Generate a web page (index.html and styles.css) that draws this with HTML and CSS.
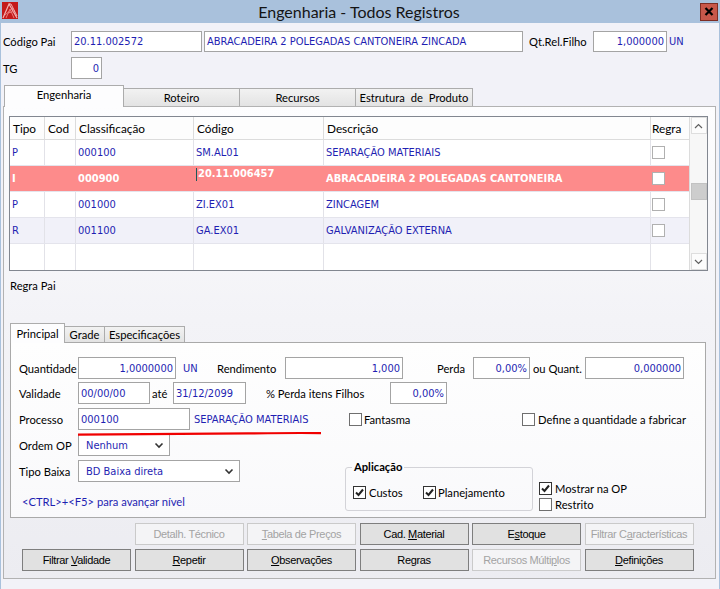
FILE: index.html
```html
<!DOCTYPE html>
<html>
<head>
<meta charset="utf-8">
<title>Engenharia - Todos Registros</title>
<link rel="stylesheet" href="styles.css">
</head>
<body>
<div class="win">
  <div class="titlebar">
    <svg class="appicon" width="16" height="17" viewBox="0 0 16 17">
      <rect x="0" y="0" width="16" height="17" fill="#c41a1a"/>
      <path d="M1 16 L7 2 L15 16" fill="none" stroke="#f3b3b3" stroke-width="1.2"/>
      <path d="M4 16 L8 7 L12 16 M6 11 L13 9 M3 13 L11 6" fill="none" stroke="#e87a7a" stroke-width="1"/>
      <path d="M7 2 L9 2 L15 14" fill="none" stroke="#ffd6d6" stroke-width="0.8"/>
    </svg>
    <div class="title">Engenharia - Todos Registros</div>
    <div class="closebtn"><svg width="10" height="9" viewBox="0 0 10 9"><path d="M1.5 1 L8.5 8 M8.5 1 L1.5 8" stroke="#000" stroke-width="2.2"/></svg></div>
  </div>

  <div class="content">
    <div class="hrow r1">
      <span class="lbl l-cp">Código Pai</span>
      <div class="inp i-cp">20.11.002572</div>
      <div class="inp i-desc">ABRACADEIRA 2 POLEGADAS CANTONEIRA ZINCADA</div>
      <span class="lbl l-qt">Qt.Rel.Filho</span>
      <div class="inp num i-qt">1,000000</div>
      <span class="bluedata un1">UN</span>
    </div>
    <div class="hrow r2">
      <span class="lbl l-cp">TG</span>
      <div class="inp num i-tg">0</div>
    </div>

    <div class="tabs1">
      <div class="tab active t-eng">Engenharia</div>
      <div class="tab t-rot">Roteiro</div>
      <div class="tab t-rec">Recursos</div>
      <div class="tab t-est">Estrutura de Produto</div>
    </div>

    <div class="panel1">
      <div class="grid">
        <div class="gcols">
          <div class="grow ghead">
            <div class="gc">Tipo</div><div class="gc">Cod</div><div class="gc">Classificação</div><div class="gc">Código</div><div class="gc">Descrição</div><div class="gc">Regra</div>
          </div>
          <div class="grow gdata">
            <div class="gc">P</div><div class="gc"></div><div class="gc">000100</div><div class="gc">SM.AL01</div><div class="gc">SEPARAÇÃO MATERIAIS</div><div class="gc"><span class="cb cb-grid"></span></div>
          </div>
          <div class="grow gdata gsel">
            <div class="gc">I</div><div class="gc"></div><div class="gc">000900</div><div class="gc gc-edit"><span class="caret"></span><span>20.11.006457</span></div><div class="gc">ABRACADEIRA 2 POLEGADAS CANTONEIRA</div><div class="gc"><span class="cb cb-grid"></span></div>
          </div>
          <div class="grow gdata">
            <div class="gc">P</div><div class="gc"></div><div class="gc">001000</div><div class="gc">ZI.EX01</div><div class="gc">ZINCAGEM</div><div class="gc"><span class="cb cb-grid"></span></div>
          </div>
          <div class="grow gdata alt">
            <div class="gc">R</div><div class="gc"></div><div class="gc">001100</div><div class="gc">GA.EX01</div><div class="gc">GALVANIZAÇÃO EXTERNA</div><div class="gc"><span class="cb cb-grid"></span></div>
          </div>
          <div class="grow gdata last">
            <div class="gc"></div><div class="gc"></div><div class="gc"></div><div class="gc"></div><div class="gc"></div><div class="gc"></div>
          </div>
        </div>
        <div class="vscroll">
          <div class="sbtn"><svg width="9" height="6" viewBox="0 0 9 6"><path d="M1 5 L4.5 1.5 L8 5" fill="none" stroke="#606060" stroke-width="1.2"/></svg></div>
          <div class="sgap1"></div>
          <div class="sthumb"></div>
          <div class="sgap2"></div>
          <div class="sbtn"><svg width="9" height="6" viewBox="0 0 9 6"><path d="M1 1 L4.5 4.5 L8 1" fill="none" stroke="#606060" stroke-width="1.2"/></svg></div>
        </div>
      </div>

      <div class="regrapai">Regra Pai</div>

      <div class="tabs2">
        <div class="tab2 active2 t-pri">Principal</div>
        <div class="tab2 t-gra">Grade</div>
        <div class="tab2 t-esp">Especificações</div>
      </div>

      <div class="panel2">
        <div class="prow pr1">
          <span class="lbl pl">Quantidade</span>
          <div class="inp num w98">1,0000000</div>
          <span class="bluedata un2">UN</span>
          <span class="lbl w68">Rendimento</span>
          <div class="inp num w118">1,000</div>
          <span class="lbl perda">Perda</span>
          <div class="inp num w57">0,00%</div>
          <span class="lbl ouq">ou Quant.</span>
          <div class="inp num w99">0,000000</div>
        </div>
        <div class="prow pr2">
          <span class="lbl pl">Validade</span>
          <div class="inp w72">00/00/00</div>
          <span class="lbl ate">até</span>
          <div class="inp w73">31/12/2099</div>
          <span class="lbl pfil">% Perda itens Filhos</span>
          <div class="inp num w57">0,00%</div>
        </div>
        <div class="prow pr3">
          <span class="lbl pl">Processo</span>
          <div class="inp w112">000100</div>
          <span class="bluedata procdesc">SEPARAÇÃO MATERIAIS</span>
          <span class="cb"></span>
          <span class="lbl fant">Fantasma</span>
          <span class="cb"></span>
          <span class="lbl defq">Define a quantidade a fabricar</span>
        </div>

        <div class="plower">
          <div class="pleft">
            <div class="prow pr4">
              <span class="lbl pl">Ordem OP</span>
              <div class="dd w92"><span>Nenhum</span><svg width="10" height="7" viewBox="0 0 10 7"><path d="M1.5 1.5 L5 5 L8.5 1.5" fill="none" stroke="#333" stroke-width="1.6"/></svg></div>
            </div>
            <div class="prow pr5">
              <span class="lbl pl">Tipo Baixa</span>
              <div class="dd w162"><span>BD Baixa direta</span><svg width="10" height="7" viewBox="0 0 10 7"><path d="M1.5 1.5 L5 5 L8.5 1.5" fill="none" stroke="#333" stroke-width="1.6"/></svg></div>
            </div>
            <div class="ctrl">&lt;CTRL&gt;+&lt;F5&gt; para avançar nível</div>
          </div>
          <div class="grpbox">
            <span class="legend">Aplicação</span>
            <div class="grprow">
              <span class="cb on"><svg width="11" height="11" viewBox="0 0 11 11"><path d="M2 5.5 L4.5 8 L9 2.5" fill="none" stroke="#222" stroke-width="2"/></svg></span>
              <span class="lbl cust">Custos</span>
              <span class="cb on"><svg width="11" height="11" viewBox="0 0 11 11"><path d="M2 5.5 L4.5 8 L9 2.5" fill="none" stroke="#222" stroke-width="2"/></svg></span>
              <span class="lbl plan">Planejamento</span>
            </div>
          </div>
          <div class="rightchk">
            <div class="chkrow">
              <span class="cb on"><svg width="11" height="11" viewBox="0 0 11 11"><path d="M2 5.5 L4.5 8 L9 2.5" fill="none" stroke="#222" stroke-width="2"/></svg></span>
              <span class="lbl">Mostrar na OP</span>
            </div>
            <div class="chkrow chk2">
              <span class="cb"></span>
              <span class="lbl">Restrito</span>
            </div>
          </div>
        </div>
      </div>

      <div class="btns">
        <div class="bspace"></div>
        <div class="btn dis">Detalh. Técnico</div>
        <div class="btn dis"><u>T</u>abela de Preços</div>
        <div class="btn">Cad. <u>M</u>aterial</div>
        <div class="btn">E<u>s</u>toque</div>
        <div class="btn dis">Filtrar C<u>a</u>racterísticas</div>
        <div class="btn">Filtrar <u>V</u>alidade</div>
        <div class="btn"><u>R</u>epetir</div>
        <div class="btn"><u>O</u>bservações</div>
        <div class="btn">Re<u>g</u>ras</div>
        <div class="btn dis">Recursos Múlti<u>p</u>los</div>
        <div class="btn"><u>D</u>efinições</div>
      </div>
    </div>
  </div>

  <svg class="redline" width="250" height="6" viewBox="0 0 250 6">
    <path d="M0 3.6 C 60 3.4, 120 3.0, 170 2.4 S 230 1.8, 243 2.2" fill="none" stroke="#f00000" stroke-width="2.2"/>
  </svg>
</div>
</body>
</html>
```

FILE: styles.css
```css
body {
  margin: 0;
  background: #f2f2f8;
}

.win {
  position: relative;
  width: 720px;
  height: 589px;
  box-sizing: border-box;
  border-left: 1px solid #a9c1dc;
  border-right: 1px solid #a9c1dc;
  background: #f2f2f8;
  font-family: Lato, "Liberation Sans", sans-serif;
  font-size: 11.2px;
  color: #000;
  overflow: hidden;
}

/* title bar */
.titlebar {
  display: flex;
  align-items: center;
  height: 23px;
  background: #a9c1dc;
}
.appicon {
  margin-left: 1px;
  margin-top: -3px;
  flex-shrink: 0;
}
.title {
  flex: 1;
  text-align: center;
  font-size: 16px;
  line-height: 23px;
  color: #141414;
}
.closebtn {
  width: 18px;
  height: 18px;
  box-sizing: border-box;
  margin-right: 1px;
  background: #c8574a;
  border: 1px solid #7d2d24;
  display: flex;
  align-items: center;
  justify-content: center;
}

.content {
  padding-left: 2px;
}

/* generic */
.lbl {
  flex-shrink: 0;
  white-space: nowrap;
}
.inp {
  box-sizing: border-box;
  height: 100%;
  flex-shrink: 0;
  border: 1px solid #a4a4a4;
  background: #fff;
  font-family: "DejaVu Sans Condensed", "DejaVu Sans", sans-serif;
  font-stretch: condensed;
  font-size: 11px;
  color: #1f1fb2;
  padding: 0 2px;
  display: flex;
  align-items: center;
  white-space: nowrap;
  overflow: hidden;
}
.inp.num {
  justify-content: flex-end;
}
.bluedata {
  font-family: "DejaVu Sans Condensed", "DejaVu Sans", sans-serif;
  font-stretch: condensed;
  font-size: 11px;
  color: #1f1fb2;
  white-space: nowrap;
  flex-shrink: 0;
}

/* header rows */
.hrow {
  display: flex;
  align-items: center;
}
.r1 {
  margin-top: 8px;
  height: 21px;
}
.r2 {
  margin-top: 5px;
  height: 22px;
}
.l-cp { width: 68px; }
.i-cp { width: 131px; }
.i-desc { width: 319px; margin-left: 2px; }
.l-qt { width: 64px; margin-left: 6px; }
.i-qt { width: 74px; }
.un1 { margin-left: 2px; }
.i-tg { width: 31px; }

/* main tabs */
.tabs1 {
  display: flex;
  align-items: flex-end;
  height: 21px;
  margin-top: 6px;
  padding-left: 1px;
}
.tab {
  box-sizing: border-box;
  height: 18px;
  border: 1px solid #acacac;
  border-bottom: none;
  background: linear-gradient(#f2f2f2, #e3e3e3);
  text-align: center;
  line-height: 17px;
  margin-left: -1px;
  white-space: nowrap;
}
.tab.active {
  height: 22px;
  margin-left: 0;
  margin-bottom: -1px;
  background: #fdfdfe;
  position: relative;
  z-index: 2;
  line-height: 18px;
}
.t-eng { width: 120px; }
.t-rot { width: 117px; }
.t-rec { width: 117px; }
.t-est { width: 118px; word-spacing: 3px; }

.panel1 {
  box-sizing: border-box;
  width: 713px;
  height: 473px;
  border: 1px solid #b2b2b2;
  background: linear-gradient(#fdfdfe 0%, #f3f3f7 45%, #ececf1 100%);
}

/* grid */
.grid {
  box-sizing: border-box;
  display: flex;
  width: 699px;
  height: 155px;
  margin: 9px 0 0 5px;
  border: 1px solid #828790;
  background: #fff;
}
.gcols {
  width: 679px;
}
.grow {
  display: grid;
  grid-template-columns: 35px 31px 118px 130px 327px 38px;
  box-sizing: border-box;
  border-bottom: 1px solid #e4e4ec;
}
.ghead {
  height: 23px;
  border-bottom-color: #dcdcdc;
  font-size: 11.8px;
  background: #fdfdfd;
}
.gdata {
  height: 26px;
  font-family: "DejaVu Sans Condensed", "DejaVu Sans", sans-serif;
  font-stretch: condensed;
  font-size: 11px;
  color: #1f1fb2;
}
.gdata.alt {
  background: #f1f1f9;
}
.gdata.last {
  border-bottom: none;
  height: 26px;
}
.gdata.gsel {
  background: #fd8b8b;
  color: #fff;
  font-weight: bold;
}
.gc {
  display: flex;
  align-items: center;
  padding-left: 2px;
  border-right: 1px solid #e2e2e8;
  white-space: nowrap;
  overflow: hidden;
}
.ghead .gc {
  border-right-color: #dcdcdc;
  padding-left: 3px;
}
.grow .gc:last-child {
  border-right: none;
  padding-left: 1px;
}
.gsel .gc {
  border-right-color: transparent;
}
.gc-edit {
  align-items: flex-start;
  padding-top: 1px;
  box-sizing: border-box;
}
.caret {
  display: inline-block;
  width: 1px;
  height: 13px;
  margin-right: 1px;
  margin-top: 1px;
  background: #1b5a5a;
}

.vscroll {
  width: 18px;
  box-sizing: border-box;
  display: flex;
  flex-direction: column;
  align-items: center;
  background: #f7f7f7;
  border-left: 1px solid #dcdcdc;
}
.sbtn {
  box-sizing: border-box;
  width: 16px;
  height: 17px;
  border: 1px solid #dedede;
  background: #fcfcfc;
  display: flex;
  align-items: center;
  justify-content: center;
}
.sgap1 { height: 49px; }
.sthumb {
  box-sizing: border-box;
  width: 16px;
  height: 17px;
  background: #cdcdcd;
  border: 1px solid #c2c2c2;
}
.sgap2 { flex: 1; }

/* checkboxes */
.cb {
  display: inline-flex;
  align-items: center;
  justify-content: center;
  box-sizing: border-box;
  width: 13px;
  height: 13px;
  border: 1px solid #6f6f6f;
  background: #fff;
  flex-shrink: 0;
}
.cb.on {
  border-color: #333;
}
.cb-grid {
  border-color: #b0b0b0;
}

.regrapai {
  margin: 7px 0 0 6px;
  height: 15px;
  line-height: 15px;
}

/* inner tabs */
.tabs2 {
  display: flex;
  align-items: flex-end;
  height: 19px;
  margin-top: 30px;
  padding-left: 6px;
}
.tab2 {
  box-sizing: border-box;
  height: 16px;
  border: 1px solid #acacac;
  border-bottom: none;
  background: linear-gradient(#f2f2f2, #e3e3e3);
  text-align: center;
  line-height: 15px;
  margin-left: -1px;
  white-space: nowrap;
}
.tab2.active2 {
  height: 20px;
  margin-left: 0;
  margin-bottom: -1px;
  background: #fdfdfe;
  position: relative;
  z-index: 2;
  line-height: 19px;
}
.t-pri { width: 55px; }
.t-gra { width: 41px; }
.t-esp { width: 81px; }

.panel2 {
  box-sizing: border-box;
  width: 696px;
  height: 176px;
  margin-left: 6px;
  border: 1px solid #a9a9a9;
  background: linear-gradient(#fefefe, #f9f9fb);
  padding: 14px 0 0 8px;
}
.prow {
  display: flex;
  align-items: center;
  height: 22px;
}
.pr2 { margin-top: 3px; }
.pr3 { margin-top: 4px; }
.pr5 { margin-top: 4px; }
.pl { width: 59px; }
.w98 { width: 98px; }
.un2 { width: 41px; padding-left: 7px; box-sizing: border-box; }
.w68 { width: 68px; }
.w118 { width: 118px; }
.perda { width: 36px; margin-left: 34px; }
.w57 { width: 57px; }
.ouq { width: 52px; margin-left: 3px; }
.w99 { width: 99px; }
.w72 { width: 72px; }
.ate { width: 21px; margin-left: 2px; }
.w73 { width: 73px; }
.pfil { width: 124px; margin-left: 20px; }
.w112 { width: 112px; }
.procdesc { width: 155px; margin-left: 4px; }
.fant { width: 158px; margin-left: 2px; }
.defq { margin-left: 3px; }

.plower {
  display: flex;
  margin-top: 4px;
}
.pleft {
  width: 326px;
  flex-shrink: 0;
}
.dd {
  box-sizing: border-box;
  height: 22px;
  border: 1px solid #a4a4a4;
  background: #fff;
  display: flex;
  align-items: center;
  justify-content: space-between;
  padding: 0 5px 0 7px;
  font-family: "DejaVu Sans Condensed", "DejaVu Sans", sans-serif;
  font-stretch: condensed;
  font-size: 11px;
  color: #1f1fb2;
  flex-shrink: 0;
}
.w92 { width: 92px; }
.w162 { width: 162px; }
.ctrl {
  margin: 12px 0 0 3px;
  line-height: 15px;
  color: #1f1fb2;
  white-space: nowrap;
}

.grpbox {
  box-sizing: border-box;
  width: 188px;
  height: 44px;
  margin-top: 33px;
  border: 1px solid #d3d3d8;
  border-radius: 3px;
  flex-shrink: 0;
}
.legend {
  display: block;
  width: max-content;
  margin: -8px 0 0 6px;
  padding: 0 2px;
  height: 14px;
  line-height: 14px;
  font-weight: bold;
  background: #fbfbfc;
}
.grprow {
  display: flex;
  align-items: center;
  margin-top: 12px;
  padding-left: 7px;
}
.cust { width: 54px; margin-left: 3px; }
.plan { margin-left: 2px; }

.rightchk {
  margin: 48px 0 0 6px;
}
.chkrow {
  display: flex;
  align-items: center;
  height: 13px;
}
.chkrow .lbl {
  margin-left: 3px;
}
.chk2 {
  margin-top: 3px;
}

/* buttons */
.btns {
  display: grid;
  grid-template-columns: repeat(6, 109px);
  grid-auto-rows: 22px;
  column-gap: 3.5px;
  row-gap: 4px;
  margin-top: 5px;
  padding-left: 18px;
}
.btn {
  box-sizing: border-box;
  border: 1px solid #7e7e7e;
  background: #e1e1e1;
  text-align: center;
  line-height: 20px;
  font-family: "Liberation Sans", Arial, sans-serif;
  font-size: 11px;
  letter-spacing: -0.35px;
  color: #000;
  white-space: nowrap;
  overflow: hidden;
}
.btn.dis {
  background: #f4f4f6;
  border-color: #cacaca;
  color: #a3a3a3;
}

.redline {
  position: absolute;
  left: 77px;
  top: 431px;
}
```
